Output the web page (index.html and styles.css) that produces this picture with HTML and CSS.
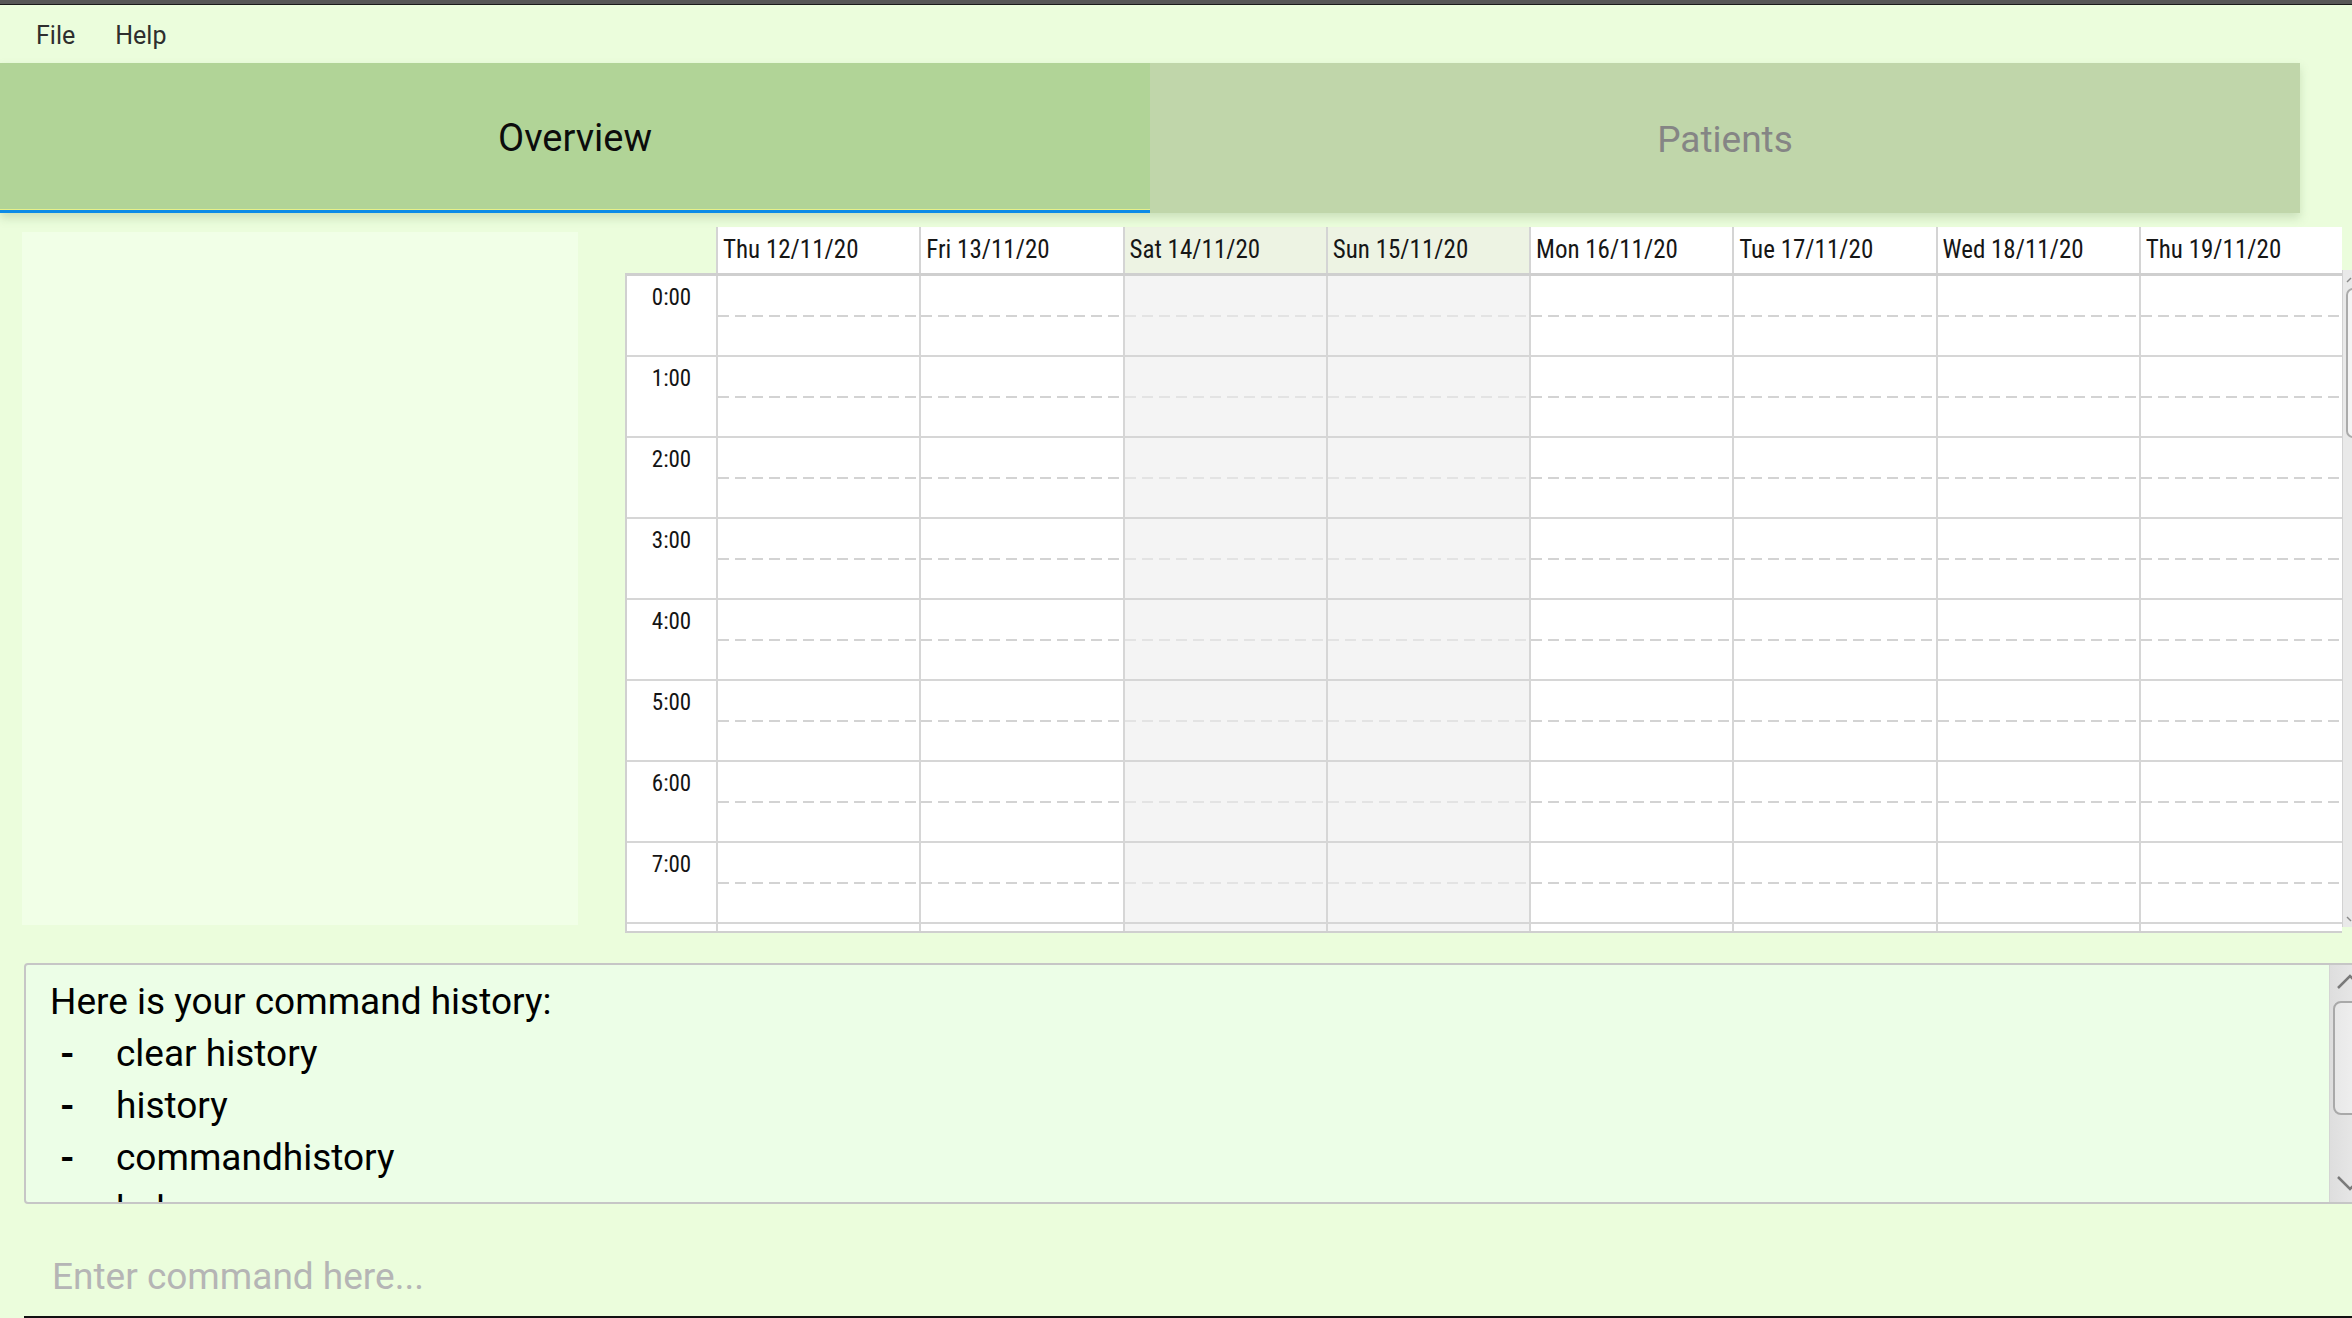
FILE: index.html
```html
<!DOCTYPE html>
<html lang="en">
<head>
<meta charset="utf-8">
<title>Overview</title>
<link rel="stylesheet" href="styles.css">
</head>
<body>
<div class="titlebar"></div>
<nav class="menubar"><span class="menu-item">File</span><span class="menu-item">Help</span></nav>
<div class="tabs">
  <div class="tab active">Overview</div>
  <div class="tab">Patients</div>
</div>
<main class="main">
  <aside class="side"></aside>
  <section class="cal">
    <div class="cal-head">
      <div class="corner"></div>
      <div class="dh">Thu 12/11/20</div>
      <div class="dh">Fri 13/11/20</div>
      <div class="dh we">Sat 14/11/20</div>
      <div class="dh we">Sun 15/11/20</div>
      <div class="dh">Mon 16/11/20</div>
      <div class="dh">Tue 17/11/20</div>
      <div class="dh">Wed 18/11/20</div>
      <div class="dh">Thu 19/11/20</div>
      <div class="head-rest"></div>
    </div>
    <div class="cal-body">
      <div class="grid">
        <div class="row"><div class="tc">0:00</div><div class="dc"></div><div class="dc"></div><div class="dc we"></div><div class="dc we"></div><div class="dc"></div><div class="dc"></div><div class="dc"></div><div class="dc"></div></div>
        <div class="row"><div class="tc">1:00</div><div class="dc"></div><div class="dc"></div><div class="dc we"></div><div class="dc we"></div><div class="dc"></div><div class="dc"></div><div class="dc"></div><div class="dc"></div></div>
        <div class="row"><div class="tc">2:00</div><div class="dc"></div><div class="dc"></div><div class="dc we"></div><div class="dc we"></div><div class="dc"></div><div class="dc"></div><div class="dc"></div><div class="dc"></div></div>
        <div class="row"><div class="tc">3:00</div><div class="dc"></div><div class="dc"></div><div class="dc we"></div><div class="dc we"></div><div class="dc"></div><div class="dc"></div><div class="dc"></div><div class="dc"></div></div>
        <div class="row"><div class="tc">4:00</div><div class="dc"></div><div class="dc"></div><div class="dc we"></div><div class="dc we"></div><div class="dc"></div><div class="dc"></div><div class="dc"></div><div class="dc"></div></div>
        <div class="row"><div class="tc">5:00</div><div class="dc"></div><div class="dc"></div><div class="dc we"></div><div class="dc we"></div><div class="dc"></div><div class="dc"></div><div class="dc"></div><div class="dc"></div></div>
        <div class="row"><div class="tc">6:00</div><div class="dc"></div><div class="dc"></div><div class="dc we"></div><div class="dc we"></div><div class="dc"></div><div class="dc"></div><div class="dc"></div><div class="dc"></div></div>
        <div class="row"><div class="tc">7:00</div><div class="dc"></div><div class="dc"></div><div class="dc we"></div><div class="dc we"></div><div class="dc"></div><div class="dc"></div><div class="dc"></div><div class="dc"></div></div>
        <div class="row partial"><div class="tc"></div><div class="dc"></div><div class="dc"></div><div class="dc we"></div><div class="dc we"></div><div class="dc"></div><div class="dc"></div><div class="dc"></div><div class="dc"></div></div>
      </div>
      <div class="vscroll">
        <svg class="arr up" width="10" height="8" viewBox="0 0 10 8"><path d="M2 6 L6 2" stroke="#8a8a8a" stroke-width="1.5" fill="none"/></svg>
        <div class="thumb"></div>
        <svg class="arr down" width="10" height="8" viewBox="0 0 10 8"><path d="M2 2 L6 6" stroke="#8a8a8a" stroke-width="1.5" fill="none"/></svg>
      </div>
    </div>
  </section>
</main>
<section class="result">
  <div class="result-text">
    <div class="line">Here is your command history:</div>
    <div class="line"><span class="dash">-</span>clear history</div>
    <div class="line"><span class="dash">-</span>history</div>
    <div class="line"><span class="dash">-</span>commandhistory</div>
    <div class="line"><span class="dash">-</span>help</div>
  </div>
  <div class="rscroll">
    <svg class="rarr" width="40" height="22" viewBox="0 0 40 22"><path d="M8 17 L20 5 L32 17" stroke="#7a7a7a" stroke-width="2.5" fill="none"/></svg>
    <div class="rthumb"></div>
    <svg class="rarr rdown" width="40" height="22" viewBox="0 0 40 22"><path d="M8 5 L20 17 L32 5" stroke="#7a7a7a" stroke-width="2.5" fill="none"/></svg>
  </div>
</section>
<div class="cmd">Enter command here...</div>
</body>
</html>
```

FILE: styles.css
```css
* { box-sizing: border-box; }
html, body { margin: 0; padding: 0; }
body {
  width: 2352px;
  height: 1318px;
  overflow: hidden;
  background: #ebfddc;
  font-family: Roboto, "Liberation Sans", sans-serif;
  color: #111;
}
.titlebar {
  height: 5px;
  background: #575757;
  border-bottom: 1px solid #1a1a1a;
}
.menubar {
  height: 58px;
  display: flex;
  align-items: center;
  gap: 40px;
  padding-left: 36px;
  padding-top: 2px;
  font-size: 25px;
  color: #2e2e2e;
}
.tabs {
  height: 150px;
  display: flex;
  position: relative;
  z-index: 1;
  box-shadow: 0 5px 9px rgba(120, 150, 100, 0.28);
  margin-right: 52px;
}
.tab {
  width: 1150px;
  display: flex;
  align-items: center;
  justify-content: center;
  padding-top: 3px;
  font-size: 37px;
  background: #c0d6aa;
  color: #858585;
}
.tab.active {
  background: #b1d497;
  color: #0c0c0c;
  font-size: 38px;
  border-bottom: 3px solid #0b8be6;
  box-shadow: inset 0 -1px 0 #e6f08a;
}
.main {
  display: flex;
  padding-top: 14px;
  height: 720px;
}
.side {
  width: 556px;
  height: 693px;
  margin: 5px 0 0 22px;
  background: #f1ffe7;
}
.cal {
  margin-left: 47px;
  width: 1727px;
  display: flex;
  flex-direction: column;
}
.cal-head {
  display: grid;
  grid-template-columns: 91px repeat(8, 1fr) 10px;
  height: 46px;
}
.dh {
  background: #fff;
  border-left: 2px solid #d4d4d4;
  padding-left: 5px;
  font-size: 25px;
  font-stretch: 85%;
  line-height: 46px;
  color: #161616;
  white-space: nowrap;
  overflow: hidden;
}
.dh.we { background: #edf3e3; }
.cal-body {
  display: flex;
  height: 660px;
}
.grid {
  width: 1717px;
  border-top: 3px solid #cfcfcf;
  border-left: 2px solid #d0d0d0;
  border-bottom: 2px solid #cfcfcf;
  background: #fff;
  overflow: hidden;
}
.row {
  display: grid;
  grid-template-columns: 89px repeat(8, 1fr);
  height: 81px;
  border-bottom: 2px solid #d6d6d6;
}
.row.partial { height: 7px; border-bottom: none; }
.tc {
  text-align: center;
  font-size: 23px;
  font-stretch: 85%;
  line-height: 27px;
  padding-top: 8px;
  color: #141414;
}
.dc {
  position: relative;
  border-left: 2px solid #d6d6d6;
  background: #fff;
}
.dc.we { background: #f4f4f4; }
.dc::after {
  content: "";
  position: absolute;
  left: 0;
  right: 0;
  top: 39px;
  height: 2px;
  background: repeating-linear-gradient(to right, #d3d3d3 0 11px, transparent 11px 17px);
}
.dc.we::after {
  background: repeating-linear-gradient(to right, #e3e3e3 0 11px, transparent 11px 17px);
}
.row.partial .dc::after { display: none; }
.vscroll {
  width: 10px;
  height: 657px;
  margin-top: -3px;
  background: #e9e9e9;
  border-left: 1px solid #d2d2d2;
  display: flex;
  flex-direction: column;
  overflow: hidden;
}
.arr { display: block; margin: 6px 0 0 2px; flex: none; }
.arr.down { margin-top: auto; margin-bottom: 4px; }
.thumb {
  flex: none;
  margin: 4px 0 0 3px;
  width: 24px;
  height: 150px;
  border: 2px solid #ababab;
  border-radius: 7px;
  background: #f4f4f4;
}
.result {
  margin: 30px -20px 0 24px;
  height: 241px;
  border: 2px solid #c6c6c6;
  border-radius: 4px;
  background: #ecfee7;
  display: flex;
  overflow: hidden;
}
.result-text {
  flex: 1;
  padding: 11px 0 0 24px;
  font-size: 37px;
  line-height: 52px;
  color: #000;
  overflow: hidden;
}
.dash {
  display: inline-block;
  width: 66px;
  padding-left: 10px;
  font-weight: 700;
}
.rscroll {
  width: 41px;
  background: linear-gradient(to right, #dedede, #ececec);
  border-left: 1px solid #d4d4d4;
  display: flex;
  flex-direction: column;
}
.rarr { display: block; margin-top: 6px; flex: none; }
.rthumb {
  flex: none;
  margin: 8px 0 0 3px;
  width: 34px;
  height: 114px;
  border: 2px solid #a9a9a9;
  border-radius: 8px;
  background: linear-gradient(to right, #e8e8e8, #f2f2f2);
}
.rdown { margin-top: auto; margin-bottom: 8px; }
.cmd {
  margin: 0 -20px 0 24px;
  height: 114px;
  padding: 47px 0 0 28px;
  font-size: 37px;
  line-height: 52px;
  color: #b5b5b5;
  border-bottom: 2px solid #111;
}
```
